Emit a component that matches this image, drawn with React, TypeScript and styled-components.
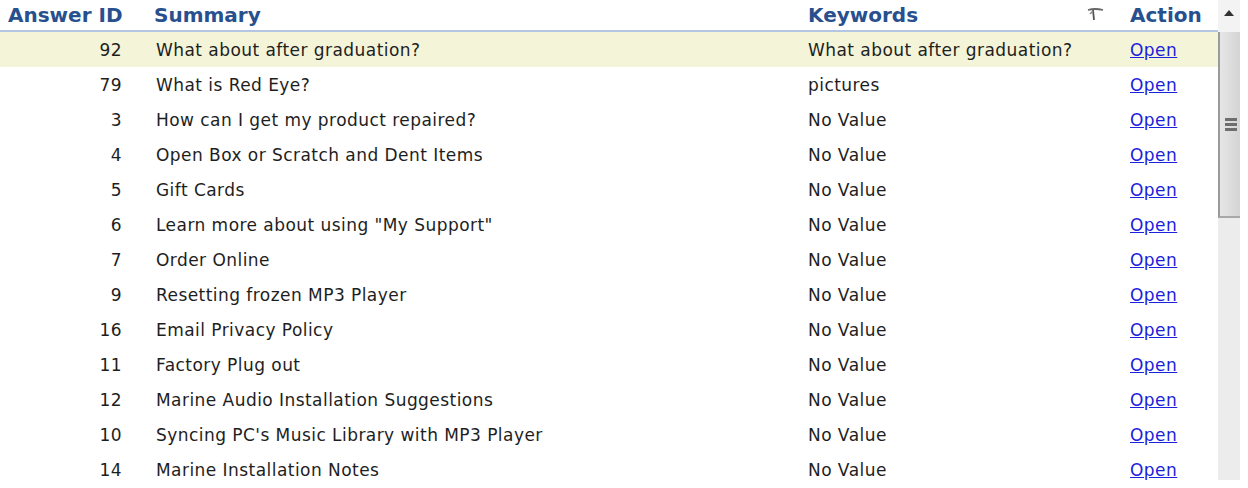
import React from 'react';
import styled, { createGlobalStyle } from 'styled-components';

const GlobalStyle = createGlobalStyle`
    html, body {
        margin: 0;
        padding: 0;
        background: #ffffff;
        overflow: hidden;
    }
`;

interface Answer {
    id: number
    summary: string
    keywords: string
}

const answers: Answer[] = [
    { id: 92, summary: 'What about after graduation?', keywords: 'What about after graduation?' },
    { id: 79, summary: 'What is Red Eye?', keywords: 'pictures' },
    { id: 3, summary: 'How can I get my product repaired?', keywords: 'No Value' },
    { id: 4, summary: 'Open Box or Scratch and Dent Items', keywords: 'No Value' },
    { id: 5, summary: 'Gift Cards', keywords: 'No Value' },
    { id: 6, summary: 'Learn more about using "My Support"', keywords: 'No Value' },
    { id: 7, summary: 'Order Online', keywords: 'No Value' },
    { id: 9, summary: 'Resetting frozen MP3 Player', keywords: 'No Value' },
    { id: 16, summary: 'Email Privacy Policy', keywords: 'No Value' },
    { id: 11, summary: 'Factory Plug out', keywords: 'No Value' },
    { id: 12, summary: 'Marine Audio Installation Suggestions', keywords: 'No Value' },
    { id: 10, summary: "Syncing PC's Music Library with MP3 Player", keywords: 'No Value' },
    { id: 14, summary: 'Marine Installation Notes', keywords: 'No Value' },
];

const Page = styled.div`
    display: flex;
    width: 1248px;
    height: 488px;
    overflow: hidden;
    font-family: "DejaVu Sans", Verdana, sans-serif;
`;

const Table = styled.div`
    width: 1218px;
    display: flex;
    flex-direction: column;
`;

const columns = '145px 663px 322px 1fr';

const HeaderRow = styled.div`
    display: grid;
    grid-template-columns: ${columns};
    align-items: center;
    height: 30px;
    border-bottom: 2px solid #b3c6e4;
`;

const HeaderCell = styled.div<{ $pad?: number }>`
    display: flex;
    align-items: center;
    justify-content: space-between;
    padding-left: ${({ $pad }) => $pad ?? 0}px;
    font-size: 20px;
    font-weight: bold;
    color: #28508e;
    white-space: nowrap;
`;

const SortIcon = styled.svg`
    width: 17px;
    height: 14px;
    margin-right: 26px;
    margin-top: -2px;
`;

const Row = styled.div<{ $selected?: boolean }>`
    display: grid;
    grid-template-columns: ${columns};
    align-items: center;
    height: 35px;
    background: ${({ $selected }) => $selected ? '#f4f4d8' : 'transparent'};
    font-size: 17px;
    letter-spacing: 0.45px;
    color: #1e1e1e;
`;

const IdCell = styled.div`
    text-align: right;
    padding-right: 23px;
`;

const TextCell = styled.div<{ $pad?: number }>`
    padding-left: ${({ $pad }) => $pad ?? 0}px;
    white-space: nowrap;
    overflow: hidden;
`;

const OpenLink = styled.a`
    color: #1b22dc;
    text-decoration: underline;
    cursor: pointer;
`;

const ScrollBar = styled.div`
    width: 22px;
    height: 480px;
    display: flex;
    flex-direction: column;
    background: #ececec;
`;

const ArrowButton = styled.div`
    height: 32px;
    background: #f3f3f3;
    display: flex;
    justify-content: center;
    padding-top: 10px;
    box-sizing: border-box;
`;

const Thumb = styled.div`
    height: 186px;
    box-sizing: border-box;
    border-left: 2px solid #9a9a9a;
    border-bottom: 2px solid #a8a8a8;
    background: linear-gradient(to right, #e6e6e6, #d4d4d4);
    display: flex;
    flex-direction: column;
    align-items: center;
    justify-content: center;
    gap: 2px;
    padding-left: 2px;
`;

const Grip = styled.span`
    display: block;
    width: 12px;
    height: 3px;
    background: #6e6e6e;
`;

export default function App() {
    return (
        <>
            <GlobalStyle />
            <Page>
                <Table>
                    <HeaderRow>
                        <HeaderCell $pad={8}>Answer ID</HeaderCell>
                        <HeaderCell $pad={9}>Summary</HeaderCell>
                        <HeaderCell>
                            Keywords
                            <SortIcon viewBox="0 0 17 14">
                                <path d="M1 3 Q8 1 16 3" stroke="#666" strokeWidth="1.8" fill="none" />
                                <path d="M6 3 L7 13" stroke="#555" strokeWidth="1.8" />
                                <path d="M3 7 L6 4" stroke="#888" strokeWidth="1.4" />
                            </SortIcon>
                        </HeaderCell>
                        <HeaderCell>Action</HeaderCell>
                    </HeaderRow>
                    {answers.map((a, i) => (
                        <Row key={a.id} $selected={i === 0}>
                            <IdCell>{a.id}</IdCell>
                            <TextCell $pad={11}>{a.summary}</TextCell>
                            <TextCell>{a.keywords}</TextCell>
                            <TextCell><OpenLink>Open</OpenLink></TextCell>
                        </Row>
                    ))}
                </Table>
                <ScrollBar>
                    <ArrowButton>
                        <svg width="10" height="6" viewBox="0 0 10 6">
                            <path d="M0 6 L5 0 L10 6 Z" fill="#333" />
                        </svg>
                    </ArrowButton>
                    <Thumb>
                        <Grip />
                        <Grip />
                        <Grip />
                    </Thumb>
                </ScrollBar>
            </Page>
        </>
    );
}
